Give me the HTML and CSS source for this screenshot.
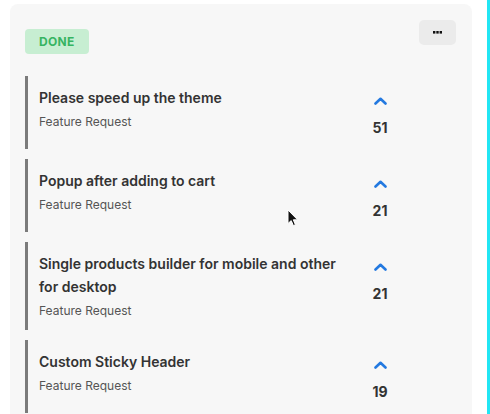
FILE: index.html
```html
<!DOCTYPE html>
<html lang="en">
<head>
<meta charset="utf-8">
<title>Done column</title>
<link rel="stylesheet" href="styles.css">
</head>
<body>
<div class="page">
  <section class="card">
    <header class="card-head">
      <span class="badge">DONE</span>
      <button class="more" aria-label="More">
        <svg width="9" height="3" viewBox="0 0 9 3"><rect x="0" y="0" width="2.4" height="2.6" fill="#111"/><rect x="3.3" y="0" width="2.4" height="2.6" fill="#111"/><rect x="6.6" y="0" width="2.4" height="2.6" fill="#111"/></svg>
      </button>
    </header>
    <ul class="list">
      <li class="item">
        <div class="info">
          <div class="title">Please speed up the theme</div>
          <div class="tag">Feature Request</div>
        </div>
        <div class="vote">
          <span class="up"><svg width="13" height="8" viewBox="0 0 13 8"><path d="M1.5 6.5 L6.5 1.8 L11.5 6.5" fill="none" stroke="#2379e0" stroke-width="2.6" stroke-linecap="round" stroke-linejoin="round"/></svg></span>
          <span class="count">51</span>
        </div>
      </li>
      <li class="item">
        <div class="info">
          <div class="title">Popup after adding to cart</div>
          <div class="tag">Feature Request</div>
        </div>
        <div class="vote">
          <span class="up"><svg width="13" height="8" viewBox="0 0 13 8"><path d="M1.5 6.5 L6.5 1.8 L11.5 6.5" fill="none" stroke="#2379e0" stroke-width="2.6" stroke-linecap="round" stroke-linejoin="round"/></svg></span>
          <span class="count">21</span>
        </div>
      </li>
      <li class="item">
        <div class="info">
          <div class="title">Single products builder for mobile and other for desktop</div>
          <div class="tag">Feature Request</div>
        </div>
        <div class="vote">
          <span class="up"><svg width="13" height="8" viewBox="0 0 13 8"><path d="M1.5 6.5 L6.5 1.8 L11.5 6.5" fill="none" stroke="#2379e0" stroke-width="2.6" stroke-linecap="round" stroke-linejoin="round"/></svg></span>
          <span class="count">21</span>
        </div>
      </li>
      <li class="item">
        <div class="info">
          <div class="title">Custom Sticky Header</div>
          <div class="tag">Feature Request</div>
        </div>
        <div class="vote">
          <span class="up"><svg width="13" height="8" viewBox="0 0 13 8"><path d="M1.5 6.5 L6.5 1.8 L11.5 6.5" fill="none" stroke="#2379e0" stroke-width="2.6" stroke-linecap="round" stroke-linejoin="round"/></svg></span>
          <span class="count">19</span>
        </div>
      </li>
    </ul>
  </section>
  <div class="edge"></div>
  <svg class="cursor" width="12" height="18" viewBox="0 0 12 18"><path d="M1 1 L1 14.5 L4.2 11.6 L6.4 16.6 L8.4 15.7 L6.3 10.8 L10.6 10.8 Z" fill="#111" stroke="#fff" stroke-width="1" stroke-linejoin="round"/></svg>
</div>
</body>
</html>
```

FILE: styles.css
```css
* { box-sizing: border-box; }
html, body { margin: 0; padding: 0; background: #fff; }
body {
  font-family: Inter, "Noto Sans", "Liberation Sans", sans-serif;
  color: #333;
  width: 490px;
  height: 414px;
  overflow: hidden;
}
.page {
  position: relative;
  display: flex;
  height: 414px;
  padding: 4px 0 0 10px;
}
.card {
  width: 462px;
  height: 430px;
  background: #f7f7f7;
  border-radius: 8px;
  padding: 16px 15px 0 15px;
}
.card-head {
  display: flex;
  justify-content: space-between;
  align-items: flex-start;
}
.badge {
  margin-top: 9px;
  height: 25px;
  padding: 0 14px;
  display: inline-flex;
  align-items: center;
  background: #c7eed2;
  color: #36b462;
  font-size: 12px;
  font-weight: 700;
  letter-spacing: 0.3px;
  border-radius: 4px;
}
.more {
  width: 37px;
  height: 25px;
  margin-right: 1px;
  border: none;
  border-radius: 5px;
  background: #ebebeb;
  display: flex;
  align-items: center;
  justify-content: center;
  padding: 0;
}
.list {
  list-style: none;
  margin: 22px 0 0 0;
  padding: 0;
  display: flex;
  flex-direction: column;
  gap: 10px;
}
.item {
  display: flex;
  align-items: flex-start;
  gap: 12px;
  border-left: 3px solid #7b7b7b;
  padding: 10px 57px 10px 11px;
}
.info { flex: 1; }
.title {
  font-size: 14px;
  font-weight: 600;
  line-height: 23px;
  color: #333;
}
.tag {
  margin-top: 4px;
  font-size: 12px;
  line-height: 18px;
  color: #555;
}
.vote {
  width: 40px;
  display: flex;
  flex-direction: column;
  align-items: center;
}
.up {
  height: 30px;
  display: flex;
  align-items: center;
  justify-content: center;
}
.count {
  font-size: 14px;
  font-weight: 700;
  line-height: 23px;
  color: #333;
}
.edge {
  position: absolute;
  top: 0;
  left: 487px;
  width: 3px;
  height: 414px;
  background: #22e6f4;
}
.cursor {
  position: absolute;
  left: 287px;
  top: 209px;
}
```
